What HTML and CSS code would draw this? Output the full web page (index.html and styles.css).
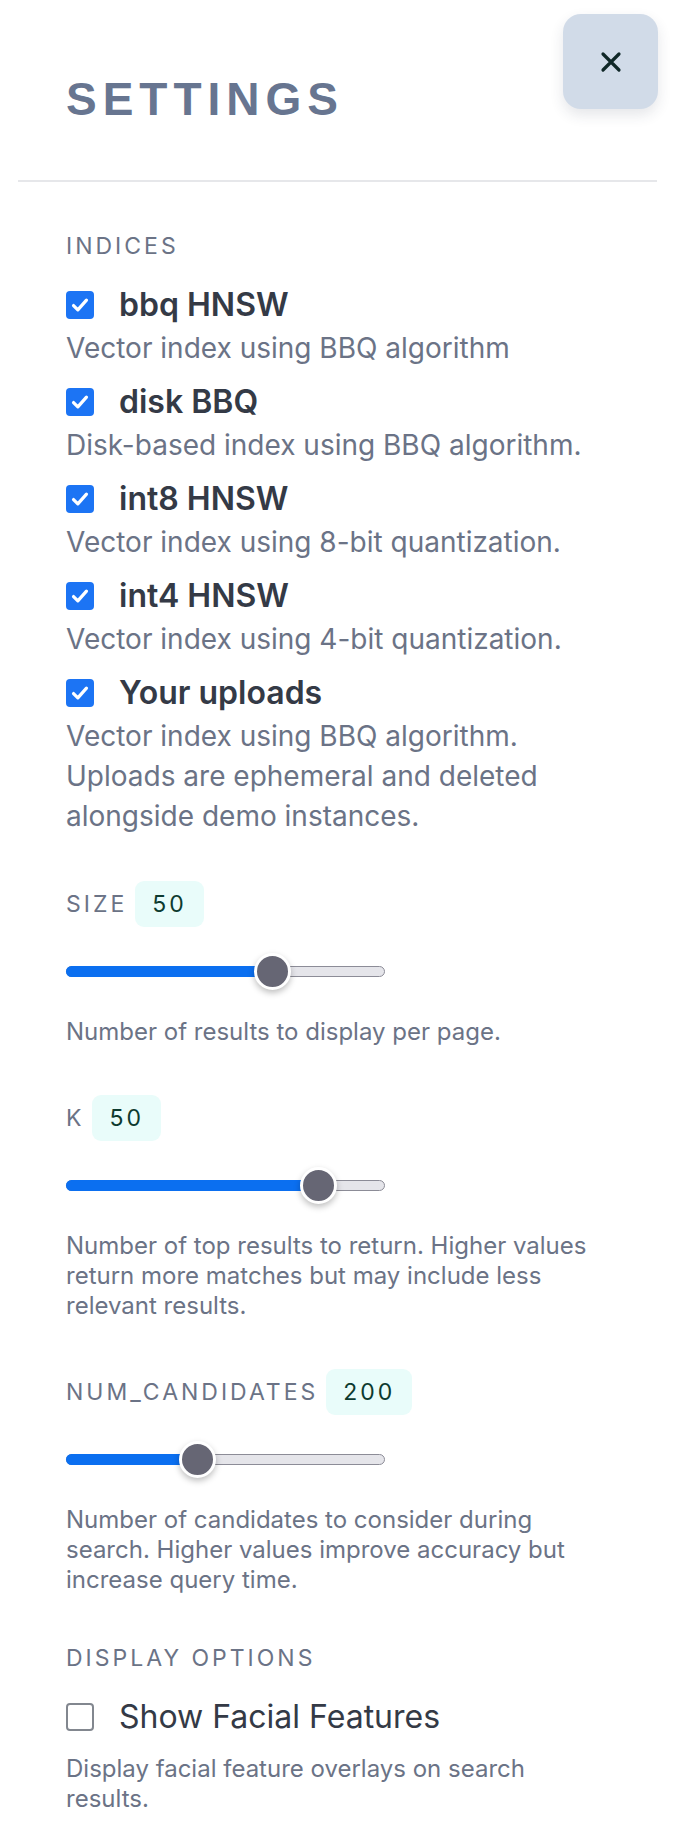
FILE: index.html
```html
<!DOCTYPE html>
<html lang="en">
<head>
<meta charset="utf-8">
<title>Settings</title>
<link rel="stylesheet" href="styles.css">
</head>
<body>
<aside class="panel">
  <button class="close" aria-label="Close">
    <svg width="22" height="22" viewBox="0 0 22 22"><path d="M3 3 L19 19 M19 3 L3 19" stroke="#0f2727" stroke-width="3.2" stroke-linecap="round" fill="none"/></svg>
  </button>
  <header class="header">
    <h1 class="title">SETTINGS</h1>
  </header>
  <div class="body">
    <section class="section">
      <h2 class="section-label">INDICES</h2>
      <div class="option">
        <div class="option-head">
          <span class="check is-on"><svg viewBox="0 0 26 26"><path d="M7 13.5 L11 17.5 L19 8.5" stroke="#fff" stroke-width="3" fill="none" stroke-linecap="round" stroke-linejoin="round"/></svg></span>
          <span class="option-name">bbq HNSW</span>
        </div>
        <p class="option-desc">Vector index using BBQ algorithm</p>
      </div>
      <div class="option">
        <div class="option-head">
          <span class="check is-on"><svg viewBox="0 0 26 26"><path d="M7 13.5 L11 17.5 L19 8.5" stroke="#fff" stroke-width="3" fill="none" stroke-linecap="round" stroke-linejoin="round"/></svg></span>
          <span class="option-name">disk BBQ</span>
        </div>
        <p class="option-desc">Disk-based index using BBQ algorithm.</p>
      </div>
      <div class="option">
        <div class="option-head">
          <span class="check is-on"><svg viewBox="0 0 26 26"><path d="M7 13.5 L11 17.5 L19 8.5" stroke="#fff" stroke-width="3" fill="none" stroke-linecap="round" stroke-linejoin="round"/></svg></span>
          <span class="option-name">int8 HNSW</span>
        </div>
        <p class="option-desc">Vector index using 8-bit quantization.</p>
      </div>
      <div class="option">
        <div class="option-head">
          <span class="check is-on"><svg viewBox="0 0 26 26"><path d="M7 13.5 L11 17.5 L19 8.5" stroke="#fff" stroke-width="3" fill="none" stroke-linecap="round" stroke-linejoin="round"/></svg></span>
          <span class="option-name">int4 HNSW</span>
        </div>
        <p class="option-desc">Vector index using 4-bit quantization.</p>
      </div>
      <div class="option">
        <div class="option-head">
          <span class="check is-on"><svg viewBox="0 0 26 26"><path d="M7 13.5 L11 17.5 L19 8.5" stroke="#fff" stroke-width="3" fill="none" stroke-linecap="round" stroke-linejoin="round"/></svg></span>
          <span class="option-name">Your uploads</span>
        </div>
        <p class="option-desc">Vector index using BBQ algorithm. Uploads are ephemeral and deleted alongside demo instances.</p>
      </div>
    </section>

    <section class="section slider-section first-slider">
      <div class="slider-head">
        <span class="section-label">SIZE</span>
        <span class="badge">50</span>
      </div>
      <div class="slider">
        <div class="track"></div>
        <div class="fill" style="width:206px"></div>
        <div class="thumb" style="left:188px"></div>
      </div>
      <p class="slider-desc">Number of results to display per page.</p>
    </section>

    <section class="section slider-section">
      <div class="slider-head">
        <span class="section-label">K</span>
        <span class="badge">50</span>
      </div>
      <div class="slider">
        <div class="track"></div>
        <div class="fill" style="width:252px"></div>
        <div class="thumb" style="left:234px"></div>
      </div>
      <p class="slider-desc">Number of top results to return. Higher values return more matches but may include less relevant results.</p>
    </section>

    <section class="section slider-section">
      <div class="slider-head">
        <span class="section-label">NUM_CANDIDATES</span>
        <span class="badge">200</span>
      </div>
      <div class="slider">
        <div class="track"></div>
        <div class="fill" style="width:131px"></div>
        <div class="thumb" style="left:113px"></div>
      </div>
      <p class="slider-desc">Number of candidates to consider during search. Higher values improve accuracy but increase query time.</p>
    </section>

    <section class="section display-section">
      <h2 class="section-label">DISPLAY OPTIONS</h2>
      <div class="option-head">
        <span class="check"></span>
        <span class="option-name is-plain">Show Facial Features</span>
      </div>
      <p class="slider-desc display-desc">Display facial feature overlays on search results.</p>
    </section>
  </div>
</aside>
</body>
</html>
```

FILE: styles.css
```css
* { box-sizing: border-box; }

html, body {
  margin: 0;
  padding: 0;
  background: #ffffff;
}

body {
  font-family: "Inter", "Noto Sans", sans-serif;
  color: #6b7386;
}

.panel {
  position: relative;
  padding: 0 17px 40px 18px;
}

.close {
  position: absolute;
  top: 14px;
  right: 16px;
  width: 95px;
  height: 95px;
  border: 0;
  border-radius: 18px;
  background: #d1dbe8;
  box-shadow: 0 6px 14px rgba(40, 50, 70, 0.12);
  display: flex;
  align-items: center;
  justify-content: center;
  padding: 0;
}

.close svg { display: block; }

.header {
  padding: 76px 0 0 48px;
  height: 182px;
  border-bottom: 2px solid #e6e7ea;
}

.title {
  margin: 0;
  font-family: "Liberation Sans", Arial, sans-serif;
  font-weight: 700;
  font-size: 46px;
  line-height: 46px;
  letter-spacing: 6px;
  color: #677590;
}

.body {
  padding: 0 48px;
}

.section-label {
  margin: 0;
  font-size: 23px;
  line-height: 28px;
  font-weight: 400;
  letter-spacing: 3px;
  color: #6b7386;
}

.section > .section-label {
  margin-top: 50px;
  margin-bottom: 27px;
}

.option {
  margin-bottom: 16px;
}

.option-head {
  display: flex;
  align-items: center;
  gap: 25px;
  height: 36px;
}

.check {
  flex: none;
  width: 28px;
  height: 28px;
  border-radius: 4px;
  border: 2px solid #82878f;
  background: #fff;
  display: flex;
}

.check.is-on {
  border: 0;
  background: #1c74f4;
}

.check svg {
  width: 28px;
  height: 28px;
  display: block;
}

.option-name {
  font-size: 32px;
  font-weight: 600;
  color: #343a46;
  line-height: 36px;
}

.option-name.is-plain {
  font-weight: 400;
}

.option-desc {
  margin: 5px 0 0;
  font-size: 28px;
  line-height: 40px;
  color: #6b7386;
}

.slider-section {
  margin-top: 48px;
}

.slider-section.first-slider {
  margin-top: 45px;
}

.slider-head {
  display: flex;
  align-items: center;
  gap: 8px;
  height: 46px;
}

.badge {
  display: inline-flex;
  align-items: center;
  justify-content: center;
  height: 46px;
  padding: 0 17px;
  border-radius: 9px;
  background: #e9fcfa;
  color: #0d3a2f;
  font-size: 23px;
  letter-spacing: 3px;
}

.slider {
  position: relative;
  width: 319px;
  height: 36px;
  margin-top: 26px;
}

.track {
  position: absolute;
  left: 0;
  right: 0;
  top: 13px;
  height: 11px;
  border-radius: 6px;
  background: #e5e5ea;
  border: 1.5px solid #8c8c97;
}

.fill {
  position: absolute;
  left: 0;
  top: 13px;
  height: 11px;
  border-radius: 6px;
  background: #0b6ff0;
}

.thumb {
  position: absolute;
  top: 0;
  width: 37px;
  height: 37px;
  border-radius: 50%;
  background: #666674;
  border: 3px solid #ffffff;
  box-shadow: 0 3px 6px rgba(0, 0, 0, 0.25);
}

.slider-desc {
  margin: 28px 0 0;
  font-size: 24px;
  line-height: 30px;
  color: #6b7386;
}

.display-section > .section-label {
  margin-top: 49px;
}

.display-desc {
  margin-top: 19px;
}
```
